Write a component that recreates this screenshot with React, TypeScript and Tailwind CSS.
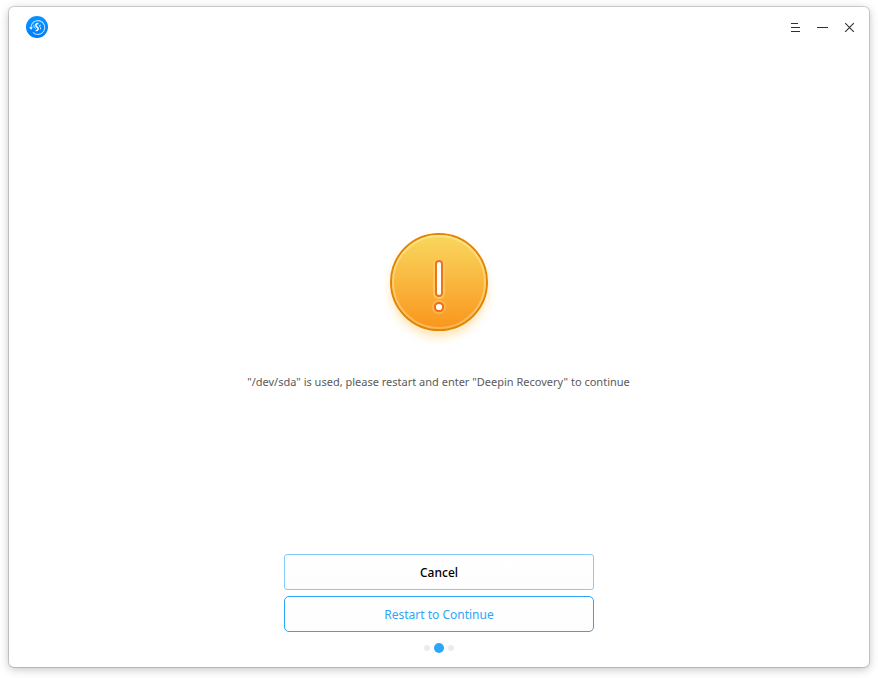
function AppLogo() {
  return (
    <svg width="22" height="22" viewBox="0 0 22 22" fill="none">
      <defs>
        <linearGradient id="logo" x1="0" y1="0" x2="0" y2="1">
          <stop offset="0" stopColor="#0a94ff" />
          <stop offset="1" stopColor="#007bff" />
        </linearGradient>
      </defs>
      <circle cx="11" cy="11" r="11" fill="url(#logo)" />
      <path d="M5 11.5A6.9 6.9 0 1 1 7 16.4" stroke="#b3dcff" strokeWidth="1.1" />
      <path d="M3.1 11.3h3.7l-1.7 2.5z" fill="#fff" />
      <path d="M12.4 7.4C10.2 7.2 9.2 9 10.2 10.3c.9 1 2.4 1.3 2 2.8-.3 1-1.3 1.5-2.5 1.3" stroke="#fff" strokeWidth="1.5" />
      <path d="M15 9.4c-1.2-.5-2 0-1.6.8.6.9 1.7 1.4 1 3.2" stroke="#e4f4ff" strokeWidth="1" />
      <path d="M8 8.8c-.5 1.9.1 3.2 1.9 3.6" stroke="#d5edff" strokeWidth="1" />
    </svg>
  );
}

function WarningIcon() {
  return (
    <svg width="128" height="128" viewBox="0 0 128 128" fill="none">
      <defs>
        <linearGradient id="face" x1="0" y1="0" x2="0" y2="1">
          <stop offset="0" stopColor="#f9d85f" />
          <stop offset="1" stopColor="#f9951d" />
        </linearGradient>
        <linearGradient id="ring" x1="0" y1="0" x2="0" y2="1">
          <stop offset="0" stopColor="#fbe587" />
          <stop offset="1" stopColor="#fab657" />
        </linearGradient>
        <filter id="glow" x="-20%" y="-20%" width="140%" height="140%">
          <feGaussianBlur stdDeviation="4" />
        </filter>
      </defs>
      <circle cx="64" cy="71" r="48.5" fill="#ffb526" fillOpacity="0.32" filter="url(#glow)" />
      <circle cx="64" cy="64" r="48" fill="url(#face)" stroke="#e38502" strokeWidth="2" />
      <circle cx="64" cy="64" r="46" stroke="url(#ring)" strokeWidth="2" />
      <rect x="58" y="40" width="12" height="41" rx="6" fill="#fbc863" />
      <rect x="60" y="42" width="8" height="37" rx="4" fill="#ef7513" />
      <rect x="62" y="44" width="4" height="33" rx="2" fill="#fff" />
      <circle cx="64" cy="89" r="7" fill="#fbb950" />
      <circle cx="64" cy="89" r="5.2" fill="#ef7113" />
      <circle cx="64" cy="89" r="3.1" fill="#fff" />
    </svg>
  );
}

function WindowControls() {
  return (
    <div className="flex items-center text-[#303030]">
      <button aria-label="Menu" className="flex h-5 w-[27px] justify-center">
        <svg width="27" height="20" fill="currentColor">
          <path d="M9 6h7v1H9zM9 10h9v1H9zM9 14h9v1H9z" />
        </svg>
      </button>
      <button aria-label="Minimize" className="flex h-5 w-[27px] justify-center">
        <svg width="27" height="20" fill="currentColor">
          <path d="M8 10h11v1H8z" />
        </svg>
      </button>
      <button aria-label="Close" className="flex h-5 w-[27px] justify-center">
        <svg width="27" height="20" fill="none" stroke="currentColor" strokeWidth="1.1">
          <path d="M9.2 6.2l8.6 8.6M17.8 6.2l-8.6 8.6" />
        </svg>
      </button>
    </div>
  );
}

export default function App() {
  return (
    <div className="h-[678px] w-[878px] overflow-hidden bg-white px-[9px] pt-[7px] font-['Noto_Sans',sans-serif]">
      <main className="flex h-[660px] w-[860px] flex-col items-center rounded-[5px] bg-white shadow-[0_0_0_1px_rgba(0,0,0,0.15),0_2px_10px_rgba(0,0,0,0.26)]">
        <header className="flex h-10 w-full items-center justify-between pr-1.5 pl-[17px]">
          <AppLogo />
          <WindowControls />
        </header>
        <div className="mt-[171px] h-32">
          <WarningIcon />
        </div>
        <p className="mt-7 h-4 pr-px text-[11px] leading-4 whitespace-nowrap text-[#5a5a5a]">
          "/dev/sda" is used, please restart and enter "Deepin Recovery" to continue
        </p>
        <div className="mt-auto flex w-[310px] flex-col gap-1.5">
          <button className="h-9 rounded-[3px] border border-[#85cafa] bg-linear-to-b from-white to-[#fdfdfd] pt-0.5 text-[12px] font-medium text-black">
            Cancel
          </button>
          <button className="h-9 rounded-[5px] border border-[#2ca7f8] bg-linear-to-b from-white to-[#fdfdfd] pt-0.5 text-[12px] text-[#2ca7f8]">
            Restart to Continue
          </button>
        </div>
        <div className="mt-[11px] mb-3.5 flex h-2.5 items-center gap-1">
          <span className="size-1.5 rounded-full bg-[#e9edf2]" />
          <span className="size-2.5 rounded-full bg-[#2ca7f8]" />
          <span className="size-1.5 rounded-full bg-[#e9edf2]" />
        </div>
      </main>
    </div>
  );
}
